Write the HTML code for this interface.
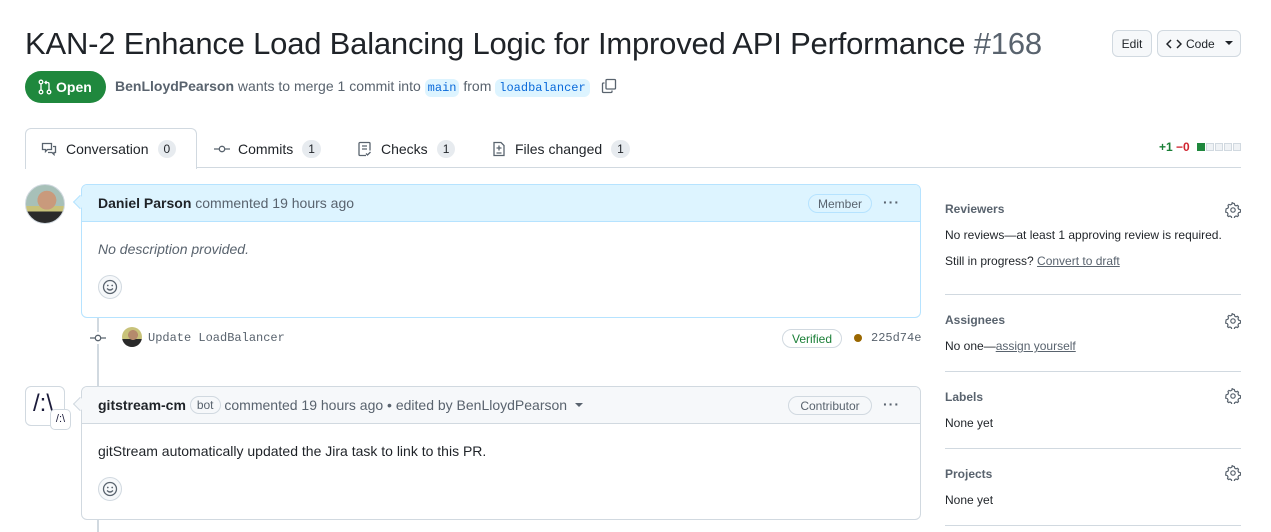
<!DOCTYPE html>
<html><head><style>
*{box-sizing:border-box;margin:0;padding:0}
body{width:1271px;height:532px;overflow:hidden;background:#fff;font-family:"Liberation Sans",sans-serif;color:#1f2328;font-size:14px;position:relative}
.a{position:absolute}
.mono{font-family:"Liberation Mono",monospace}
.cnt{display:inline-block;background:#e7ebef;border-radius:10px;font-size:12px;padding:2px 6px;margin-left:6px;color:#1f2328;line-height:14px}
.tab{position:absolute;top:129px;height:40px;display:flex;align-items:center;font-size:14px;color:#1f2328}
.gear{position:absolute;left:1225px}
.sb{position:absolute;left:945px;width:296px;font-size:12px}
.sb h3{font-size:12px;font-weight:bold;color:#59636e}
.hr{position:absolute;left:945px;width:296px;height:1px;background:#d1d9e0}
.emoji{position:absolute;width:24px;height:24px;border:1px solid #d1d9e0;border-radius:50%;background:#f6f8fa;display:flex;align-items:center;justify-content:center}
</style></head><body>
<div class="a" style="left:25px;top:26px;font-size:31px;white-space:nowrap;letter-spacing:-0.2px">KAN-2 Enhance Load Balancing Logic for Improved API Performance <span style="color:#59636e">#168</span></div>
<div class="a" style="left:1112px;top:30px;width:40px;height:27px;border:1px solid #d1d9e0;border-radius:6px;background:#f6f8fa;font-size:12px;display:flex;align-items:center;justify-content:center">Edit</div>
<div class="a" style="left:1157px;top:30px;width:84px;height:27px;border:1px solid #d1d9e0;border-radius:6px;background:#f6f8fa;font-size:12px;display:flex;align-items:center;padding-left:8px">
<svg width="16" height="12" viewBox="0 0 16 12"><path d="M5 2L1 6l4 4M11 2l4 4-4 4" stroke="#1f2328" stroke-width="1.5" fill="none"/></svg><span style="margin-left:4px">Code</span><svg style="margin-left:10px" width="8" height="5"><path d="M0 0h8L4 4z" fill="#1f2328"/></svg></div>

<div class="a" style="left:25px;top:71px;width:81px;height:32px;background:#1f883d;border-radius:16px;color:#fff;font-weight:bold;font-size:14px;display:flex;align-items:center;padding-left:13px">
<svg width="14" height="16" viewBox="0 0 14 16"><circle cx="3" cy="3" r="1.8" stroke="#fff" fill="none" stroke-width="1.3"/><circle cx="3" cy="13" r="1.8" stroke="#fff" fill="none" stroke-width="1.3"/><circle cx="11" cy="13" r="1.8" stroke="#fff" fill="none" stroke-width="1.3"/><path d="M3 5v6M11 11V5c0-1-.5-1.5-1.5-1.5H7M8.5 2L7 3.5 8.5 5" stroke="#fff" fill="none" stroke-width="1.3"/></svg><span style="margin-left:4px">Open</span></div>
<div class="a" style="left:115px;top:78px;font-size:14px;color:#59636e;white-space:nowrap"><b style="color:#59636e">BenLloydPearson</b> wants to merge 1 commit into <span class="mono" style="background:#ddf4ff;color:#0969da;font-size:12px;padding:2px 3px;border-radius:6px">main</span> from <span class="mono" style="background:#ddf4ff;color:#0969da;font-size:12px;padding:2px 4px;border-radius:6px">loadbalancer</span></div>
<svg class="a" style="left:601px;top:78px" width="16" height="16" viewBox="0 0 16 16"><rect x="5" y="1.5" width="9.5" height="9.5" rx="1" stroke="#59636e" fill="none" stroke-width="1.3"/><path d="M3.5 5H2.5a1 1 0 0 0-1 1v7.5a1 1 0 0 0 1 1H10a1 1 0 0 0 1-1V12.5" stroke="#59636e" fill="none" stroke-width="1.3"/></svg>

<div class="a" style="left:25px;top:167px;width:1216px;height:1px;background:#d1d9e0"></div>
<div class="a" style="left:25px;top:128px;width:172px;height:41px;border:1px solid #d1d9e0;border-bottom:none;border-radius:6px 6px 0 0;background:#fff"></div>
<div class="tab" style="left:41px"><svg width="16" height="16" viewBox="0 0 16 16"><path d="M1.5 2.5h9v6h-4l-2 2v-2h-3z M12 5.5h2.5v6h-1.5v2l-2-2h-4" stroke="#59636e" fill="none" stroke-width="1.3"/></svg><span style="margin-left:9px">Conversation</span><span class="cnt" style="margin-left:9px">0</span></div>
<div class="tab" style="left:214px"><svg width="16" height="16" viewBox="0 0 16 16"><circle cx="8" cy="8" r="2.7" stroke="#59636e" fill="none" stroke-width="1.3"/><path d="M0 8h5M11 8h5" stroke="#59636e" stroke-width="1.3"/></svg><span style="margin-left:8px">Commits</span><span class="cnt" style="margin-left:9px">1</span></div>
<div class="tab" style="left:357px"><svg width="16" height="16" viewBox="0 0 16 16"><path d="M9 14.5H3a1 1 0 0 1-1-1v-11a1 1 0 0 1 1-1h9a1 1 0 0 1 1 1v7M5 5h5M5 8h5M9 12.5l1.5 1.5 3-3" stroke="#59636e" fill="none" stroke-width="1.3"/></svg><span style="margin-left:8px">Checks</span><span class="cnt" style="margin-left:9px">1</span></div>
<div class="tab" style="left:491px"><svg width="16" height="16" viewBox="0 0 16 16"><path d="M3 1.5h7l3 3v10H3zM8 4.5v5M5.5 7h5M5.5 12h5" stroke="#59636e" fill="none" stroke-width="1.3"/></svg><span style="margin-left:8px">Files changed</span><span class="cnt" style="margin-left:9px">1</span></div>
<div class="a" style="left:1159px;top:140px;font-size:12px;font-weight:bold;white-space:nowrap"><span style="color:#1a7f37">+1</span> <span style="color:#d1242f">−0</span></div>
<div class="a" style="left:1197px;top:143px;display:flex;gap:1px"><span style="width:8px;height:8px;background:#1f883d"></span><span style="width:8px;height:8px;background:#eff2f5;border:1px solid #d1d9e0"></span><span style="width:8px;height:8px;background:#eff2f5;border:1px solid #d1d9e0"></span><span style="width:8px;height:8px;background:#eff2f5;border:1px solid #d1d9e0"></span><span style="width:8px;height:8px;background:#eff2f5;border:1px solid #d1d9e0"></span></div>

<!-- timeline -->
<div class="a" style="left:97px;top:317px;width:2px;height:215px;background:#d1d9e0"></div>

<!-- avatar 1 -->
<div class="a" style="left:25px;top:184px;width:40px;height:40px;border-radius:50%;background:radial-gradient(circle at 55% 40%,#c99a7c 0 30%,transparent 31%),linear-gradient(#a7c0b8 0 55%,#c8c27a 55% 70%,#2a2a2a 70%);border:1px solid #d1d9e0"></div>
<!-- comment 1 -->
<div class="a" style="left:81px;top:184px;width:840px;height:134px;border:1px solid #b6e3ff;border-radius:6px;overflow:hidden;background:#fff">
<div style="height:37px;background:#ddf4ff;border-bottom:1px solid #b6e3ff;display:flex;align-items:center;padding-left:16px;font-size:14px;color:#59636e"><b style="color:#1f2328">Daniel Parson</b>&nbsp;commented 19 hours ago</div>
</div>
<div class="a" style="left:75px;top:197px;width:10px;height:10px;background:#ddf4ff;border-left:1px solid #b6e3ff;border-bottom:1px solid #b6e3ff;transform:rotate(45deg)"></div>
<div class="a" style="left:808px;top:194px;width:64px;height:19px;border:1px solid #b6e3ff;border-radius:10px;font-size:12px;color:#59636e;display:flex;align-items:center;justify-content:center">Member</div>
<div class="a" style="left:883px;top:194px;font-size:14px;color:#59636e;letter-spacing:1px;font-weight:bold">···</div>
<div class="a" style="left:98px;top:241px;font-style:italic;color:#59636e;font-size:14px">No description provided.</div>
<div class="emoji" style="left:98px;top:275px"><svg width="16" height="16" viewBox="0 0 16 16"><circle cx="8" cy="8" r="6.5" stroke="#59636e" fill="none" stroke-width="1.3"/><circle cx="5.8" cy="6.5" r=".9" fill="#59636e"/><circle cx="10.2" cy="6.5" r=".9" fill="#59636e"/><path d="M5 9.5q3 3 6 0" stroke="#59636e" fill="none" stroke-width="1.3"/></svg></div>

<!-- commit -->
<div class="a" style="left:91px;top:332px;width:14px;height:12px;background:#fff"></div>
<svg class="a" style="left:90px;top:330px" width="16" height="16" viewBox="0 0 16 16"><circle cx="8" cy="8" r="2.7" stroke="#59636e" fill="none" stroke-width="1.3"/><path d="M0 8h5M11 8h5" stroke="#59636e" stroke-width="1.3"/></svg>
<div class="a" style="left:122px;top:327px;width:20px;height:20px;border-radius:50%;background:radial-gradient(circle at 55% 40%,#b58a6c 0 30%,transparent 31%),linear-gradient(#c8c27a 0 60%,#2a2a2a 60%)"></div>
<div class="a mono" style="left:148px;top:331px;font-size:12px;color:#59636e">Update LoadBalancer</div>
<div class="a" style="left:782px;top:329px;width:60px;height:19px;border:1px solid #d1d9e0;border-radius:10px;font-size:12px;color:#1a7f37;display:flex;align-items:center;justify-content:center">Verified</div>
<div class="a" style="left:854px;top:334px;width:8px;height:8px;border-radius:50%;background:#9a6700"></div>
<div class="a mono" style="left:871px;top:331px;font-size:12px;color:#59636e">225d74e</div>

<!-- avatar 2 -->
<div class="a" style="left:25px;top:386px;width:40px;height:40px;border:1px solid #d1d9e0;border-radius:6px;background:#fff;font-size:24px;padding:3px 0 0 7px;color:#1b1b3a">/:\</div>
<div class="a" style="left:50px;top:409px;width:21px;height:21px;border:1px solid #d1d9e0;border-radius:5px;background:#fff;font-size:11px;color:#1b1b3a;text-align:center;line-height:19px">/:\</div>
<!-- comment 2 -->
<div class="a" style="left:81px;top:386px;width:840px;height:134px;border:1px solid #d1d9e0;border-radius:6px;overflow:hidden;background:#fff">
<div style="height:37px;background:#f6f8fa;border-bottom:1px solid #d1d9e0;display:flex;align-items:center;padding-left:16px;font-size:14px;color:#59636e;white-space:nowrap"><b style="color:#1f2328">gitstream-cm</b>&nbsp;<span style="border:1px solid #d1d9e0;border-radius:10px;font-size:12px;padding:1px 6px">bot</span>&nbsp;commented 19 hours ago • edited by BenLloydPearson <svg style="margin-left:8px" width="8" height="5"><path d="M0 0h8L4 4z" fill="#59636e"/></svg></div>
</div>
<div class="a" style="left:75px;top:399px;width:10px;height:10px;background:#f6f8fa;border-left:1px solid #d1d9e0;border-bottom:1px solid #d1d9e0;transform:rotate(45deg)"></div>
<div class="a" style="left:788px;top:396px;width:84px;height:19px;border:1px solid #d1d9e0;border-radius:10px;font-size:12px;color:#59636e;display:flex;align-items:center;justify-content:center">Contributor</div>
<div class="a" style="left:883px;top:396px;font-size:14px;color:#59636e;letter-spacing:1px;font-weight:bold">···</div>
<div class="a" style="left:98px;top:443px;font-size:14px">gitStream automatically updated the Jira task to link to this PR.</div>
<div class="emoji" style="left:98px;top:477px"><svg width="16" height="16" viewBox="0 0 16 16"><circle cx="8" cy="8" r="6.5" stroke="#59636e" fill="none" stroke-width="1.3"/><circle cx="5.8" cy="6.5" r=".9" fill="#59636e"/><circle cx="10.2" cy="6.5" r=".9" fill="#59636e"/><path d="M5 9.5q3 3 6 0" stroke="#59636e" fill="none" stroke-width="1.3"/></svg></div>

<!-- sidebar -->
<div class="sb" style="top:202px"><h3>Reviewers</h3></div>
<div class="sb" style="top:228px">No reviews—at least 1 approving review is required.</div>
<div class="sb" style="top:254px">Still in progress? <span style="color:#59636e;text-decoration:underline">Convert to draft</span></div>
<div class="hr" style="top:294px"></div>
<div class="sb" style="top:313px"><h3>Assignees</h3></div>
<div class="sb" style="top:339px">No one—<span style="color:#59636e;text-decoration:underline">assign yourself</span></div>
<div class="hr" style="top:371px"></div>
<div class="sb" style="top:390px"><h3>Labels</h3></div>
<div class="sb" style="top:416px">None yet</div>
<div class="hr" style="top:448px"></div>
<div class="sb" style="top:467px"><h3>Projects</h3></div>
<div class="sb" style="top:493px">None yet</div>
<div class="hr" style="top:525px"></div>
<svg class="gear" style="top:202px" width="16" height="16" viewBox="0 0 16 16"><path d="M8 1.2l1.3.3.4 1.6 1.3.7 1.6-.5.9 1 -.5 1.6.7 1.3 1.6.4.3 1.3-.3 1.3-1.6.4-.7 1.3.5 1.6-.9 1-1.6-.5-1.3.7-.4 1.6-1.3.3-1.3-.3-.4-1.6-1.3-.7-1.6.5-.9-1 .5-1.6-.7-1.3-1.6-.4L.9 8l.3-1.3 1.6-.4.7-1.3-.5-1.6.9-1 1.6.5 1.3-.7.4-1.6z" stroke="#59636e" fill="none" stroke-width="1.2"/><circle cx="8" cy="8" r="2.2" stroke="#59636e" fill="none" stroke-width="1.2"/></svg>
<svg class="gear" style="top:313px" width="16" height="16" viewBox="0 0 16 16"><path d="M8 1.2l1.3.3.4 1.6 1.3.7 1.6-.5.9 1 -.5 1.6.7 1.3 1.6.4.3 1.3-.3 1.3-1.6.4-.7 1.3.5 1.6-.9 1-1.6-.5-1.3.7-.4 1.6-1.3.3-1.3-.3-.4-1.6-1.3-.7-1.6.5-.9-1 .5-1.6-.7-1.3-1.6-.4L.9 8l.3-1.3 1.6-.4.7-1.3-.5-1.6.9-1 1.6.5 1.3-.7.4-1.6z" stroke="#59636e" fill="none" stroke-width="1.2"/><circle cx="8" cy="8" r="2.2" stroke="#59636e" fill="none" stroke-width="1.2"/></svg>
<svg class="gear" style="top:388px" width="16" height="16" viewBox="0 0 16 16"><path d="M8 1.2l1.3.3.4 1.6 1.3.7 1.6-.5.9 1 -.5 1.6.7 1.3 1.6.4.3 1.3-.3 1.3-1.6.4-.7 1.3.5 1.6-.9 1-1.6-.5-1.3.7-.4 1.6-1.3.3-1.3-.3-.4-1.6-1.3-.7-1.6.5-.9-1 .5-1.6-.7-1.3-1.6-.4L.9 8l.3-1.3 1.6-.4.7-1.3-.5-1.6.9-1 1.6.5 1.3-.7.4-1.6z" stroke="#59636e" fill="none" stroke-width="1.2"/><circle cx="8" cy="8" r="2.2" stroke="#59636e" fill="none" stroke-width="1.2"/></svg>
<svg class="gear" style="top:465px" width="16" height="16" viewBox="0 0 16 16"><path d="M8 1.2l1.3.3.4 1.6 1.3.7 1.6-.5.9 1 -.5 1.6.7 1.3 1.6.4.3 1.3-.3 1.3-1.6.4-.7 1.3.5 1.6-.9 1-1.6-.5-1.3.7-.4 1.6-1.3.3-1.3-.3-.4-1.6-1.3-.7-1.6.5-.9-1 .5-1.6-.7-1.3-1.6-.4L.9 8l.3-1.3 1.6-.4.7-1.3-.5-1.6.9-1 1.6.5 1.3-.7.4-1.6z" stroke="#59636e" fill="none" stroke-width="1.2"/><circle cx="8" cy="8" r="2.2" stroke="#59636e" fill="none" stroke-width="1.2"/></svg>
</body></html>
